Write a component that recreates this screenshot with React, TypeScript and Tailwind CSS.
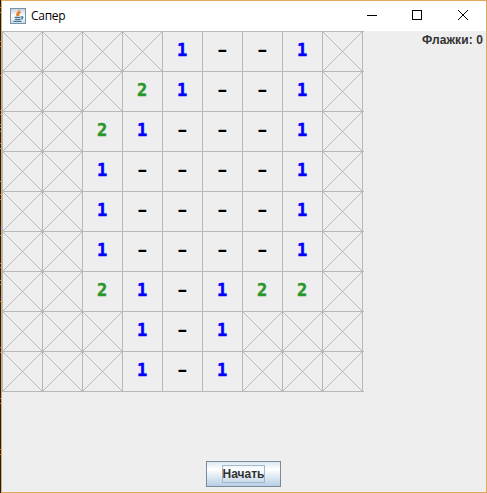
const rows = [
  'XXXX1--1X',
  'XXX21--1X',
  'XX21---1X',
  'XX1----1X',
  'XX1----1X',
  'XX1----1X',
  'XX21-122X',
  'XXX1-1XXX',
  'XXX1-1XXX',
];

const colors: Record<string, string> = {
  '1': 'text-[#0000ff] [-webkit-text-stroke:0.5px_#0000ff]',
  '2': 'text-[#289628] [-webkit-text-stroke:0.4px_#289628]',
};

function Cell({ value }: { value: string }) {
  if (value === 'X') {
    return (
      <div className="h-10 w-10 border-l border-t border-[#b8b8b8]">
        <svg className="-ml-px -mt-px block overflow-visible" width="41" height="41" viewBox="0 0 41 41" shapeRendering="crispEdges" stroke="#b8b8b8" fill="none">
          <path d="M0 0L41 41M41 0L0 41M0 .5H42M0 40.5H42" />
        </svg>
      </div>
    );
  }
  if (value === '-') {
    return (
      <div className="flex h-10 w-10 justify-center border-l border-t border-[#b8b8b8] pt-[9px] pr-px font-['Liberation_Mono',monospace] text-[18px] font-bold leading-[20px] text-black">
        <span className="scale-x-150">-</span>
      </div>
    );
  }
  return (
    <div className={`flex h-10 w-10 justify-center border-l border-t border-[#b8b8b8] pr-px pt-[8px] font-['DejaVu_Sans_Mono',monospace] text-[17px] font-bold leading-[20px] ${colors[value]}`}>
      {value}
    </div>
  );
}

function JavaIcon() {
  return (
    <svg width="16" height="16" viewBox="0 0 16 16" fill="none">
      <defs>
        <linearGradient id="tile" x1="0" y1="0" x2="0" y2="1">
          <stop offset="0" stopColor="#c3d0da" />
          <stop offset=".5" stopColor="#ffffff" />
          <stop offset="1" stopColor="#ccd9e2" />
        </linearGradient>
      </defs>
      <rect x=".5" y=".5" width="15" height="15" fill="url(#tile)" stroke="#7793a6" />
      <path d="M9.3 2C10 4 5 5 7.5 8.2M10.8 4.2C8 5 8 6 9 8" stroke="#e87f28" strokeWidth="1.5" />
      <path d="M4.5 9.3H10.5M5 11.4H10M3.5 13.4H11.5M10.8 9C13.8 8 13.5 10.5 10.5 11.3" stroke="#457593" strokeWidth="1.3" />
    </svg>
  );
}

function DesktopEdge() {
  return (
    <svg width="1" height="493" viewBox="0 0 1 493" shapeRendering="crispEdges">
      <path stroke="#c46a26" d="M.5 7v1M.5 12v1M.5 41v1M.5 46v1M.5 75v1M.5 110v1M.5 114v1M.5 143v1M.5 194v1M.5 199v1M.5 263v1M.5 267v1M.5 301v1M.5 347v1M.5 352v1M.5 398v1M.5 403v1M.5 449v1M.5 454v1" />
      <path stroke="#86878b" d="M.5 124v1M.5 127v1M.5 131v1M.5 148v1M.5 181v1M.5 235v1M.5 280v1M.5 284v1" />
      <path stroke="#242477" d="M.5 226v4M.5 297v2" />
    </svg>
  );
}

export default function App() {
  return (
    <div className="flex h-[493px] w-[487px] bg-[#1f2024]">
      <DesktopEdge />
      <div className="flex flex-1 flex-col border border-[#e0a85c] bg-[#eeeeee]">
        <header className="flex h-[30px] shrink-0 items-center bg-white pl-2">
          <JavaIcon />
          <span className="ml-[5px] font-['Open_Sans','Noto_Sans',sans-serif] text-[12px] leading-4 tracking-[-0.3px] text-black">Сапер</span>
          <svg className="ml-auto" width="138" height="30" viewBox="0 0 138 30" fill="none" stroke="#000" shapeRendering="crispEdges">
            <path d="M19 14.5h10" />
            <rect x="64.5" y="9.5" width="9" height="9" />
            <path d="M110 9l10 10M120 9l-10 10" shapeRendering="auto" />
          </svg>
        </header>
        <main className="flex h-[430px] shrink-0 justify-between">
          <div className="grid h-[361px] w-[361px] grid-cols-[repeat(9,40px)] border-b border-r border-[#b8b8b8]">
            {rows.flatMap((row, y) => [...row].map((value, x) => <Cell key={`${x}-${y}`} value={value} />))}
          </div>
          <div className="pr-[3px] pt-[1px] font-['Liberation_Sans',sans-serif] text-[12px] font-bold leading-4 tracking-[0.1px] text-[#333333]">Флажки: 0</div>
        </main>
        <footer className="flex justify-center pr-[2px]">
          <button className="flex h-[26px] w-[75px] items-center justify-center border border-[#7a8a99] bg-linear-to-b from-[#dce8f2] via-white via-30% to-[#b8cfe5] font-['Liberation_Sans',sans-serif] text-[12px] font-bold leading-4 text-[#333333]">
            <span className="flex h-[18px] w-[43px] items-center justify-center border border-[#a3b8cc] pl-px">Начать</span>
          </button>
        </footer>
      </div>
    </div>
  );
}
